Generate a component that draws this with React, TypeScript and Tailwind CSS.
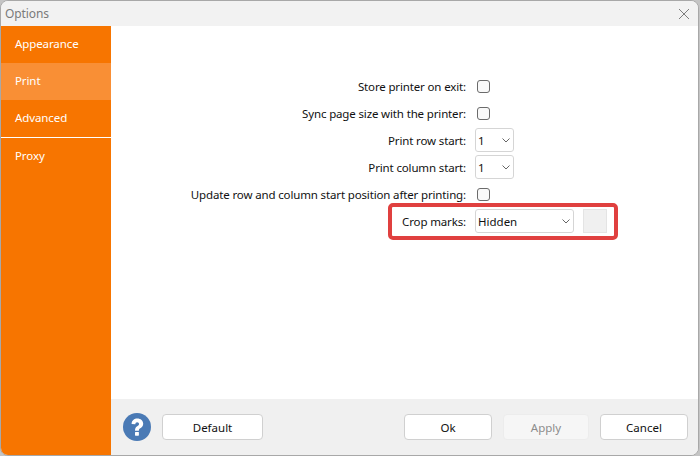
import React from "react";

function Check() {
  return <div className="ml-[11px] w-[13px] h-[13px] border border-[#6b6b6b] rounded-[3px] bg-[#f9f9f9]" />;
}

function Chevron() {
  return (
    <svg width="8" height="5" viewBox="0 0 8 5" fill="none" className="shrink-0">
      <path d="M0.5 0.5 L4 4 L7.5 0.5" stroke="#666" strokeWidth="1" />
    </svg>
  );
}

function Row({ label, children }: { label: string; children: React.ReactNode }) {
  return (
    <div className="flex items-center h-6 relative">
      <div className="w-[355px] text-right whitespace-nowrap tracking-[-0.145px] pt-[1px]">{label}</div>
      {children}
    </div>
  );
}

function Spin({ w, text }: { w: string; text: string }) {
  return (
    <div className={`ml-[9px] h-6 border border-[#d5d5d5] rounded-[3px] bg-white flex items-center justify-between pl-[2px] pr-[3px] ${w}`}>
      <span className="pt-[1px]">{text}</span>
      <Chevron />
    </div>
  );
}

export default function App() {
  return (
    <div className="w-[700px] h-[456px] bg-[#c4c4c4] overflow-hidden font-['Noto_Sans','Open_Sans',sans-serif] text-[11.5px] text-[#111]">
      <div className="w-[699px] h-[456px] border border-[#a8a8a8] rounded-[8px] bg-[#f2f2f2] flex flex-col overflow-hidden">
        <div className="h-[25px] shrink-0 flex items-center justify-between pl-[4px] pr-[8px] bg-[#f2f2f2]">
          <span className="text-[#7a7a7a] text-[12px] tracking-[-0.1px]">Options</span>
          <svg width="12" height="12" viewBox="0 0 12 12" fill="none">
            <path d="M1 1 L11 11 M11 1 L1 11" stroke="#7d7d7d" strokeWidth="1" />
          </svg>
        </div>
        <div className="flex flex-1 min-h-0">
          <div className="w-[110px] shrink-0 bg-[#f77500] text-white flex flex-col tracking-[-0.1px]">
            <div className="h-[37px] flex items-center pl-[14px] pb-[1px]">Appearance</div>
            <div className="h-[37px] flex items-center pl-[14px] pb-[1px] bg-[#f98f35]">Print</div>
            <div className="h-[37px] flex items-center pl-[14px] pb-[1px]">Advanced</div>
            <div className="h-px bg-white" />
            <div className="h-[37px] flex items-center pl-[14px] pb-[1px]">Proxy</div>
          </div>
          <div className="flex-1 flex flex-col min-w-0">
            <div className="flex-1 bg-white pt-[48px] flex flex-col gap-[3px]">
              <Row label="Store printer on exit:"><Check /></Row>
              <Row label="Sync page size with the printer:"><Check /></Row>
              <Row label="Print row start:"><Spin w="w-[39px]" text="1" /></Row>
              <Row label="Print column start:"><Spin w="w-[39px]" text="1" /></Row>
              <Row label="Update row and column start position after printing:"><Check /></Row>
              <Row label="Crop marks:">
                <Spin w="w-[99px]" text="Hidden" />
                <div className="ml-[9px] w-6 h-6 bg-[#f0f0f0] border border-[#e4e4e4]" />
                <div className="absolute left-[277px] top-[-6px] w-[230px] h-[37px] border-[4px] border-[#e0403f] rounded-[5px]" />
              </Row>
            </div>
            <div className="h-[56px] shrink-0 bg-[#f0f0f0] flex items-center pl-[12px] pr-[10px]">
              <svg width="28" height="28" viewBox="0 0 28 28" className="shrink-0">
                <circle cx="14" cy="14" r="14" fill="#4a7ab5" />
                <path d="M8.6 11 C8.6 7.2 11.3 5.4 14.3 5.4 C17.7 5.4 20.2 7.6 20.2 10.7 C20.2 13 18.9 14.2 17.3 15.2 C16.1 16 15.9 16.5 15.9 17.8 L12 17.8 C12 15.6 12.6 14.4 14.2 13.3 C15.4 12.5 16 12 16 11 C16 9.9 15.3 9.2 14.2 9.2 C13 9.2 12.4 10 12.3 11.2 Z" fill="#fff" />
                <rect x="12" y="19" width="3.9" height="3.7" rx="0.6" fill="#fff" />
              </svg>
              <div className="ml-[11px] w-[101px] h-[26px] pt-[1px] rounded-[4px] bg-white border border-[#d0d0d0] flex items-center justify-center">Default</div>
              <div className="flex-1" />
              <div className="w-[88px] h-[26px] pt-[1px] rounded-[4px] bg-white border border-[#d0d0d0] flex items-center justify-center">Ok</div>
              <div className="ml-[11px] w-[86px] h-[26px] pt-[1px] rounded-[4px] bg-[#f6f6f6] border border-[#ececec] text-[#8c8c8c] flex items-center justify-center">Apply</div>
              <div className="ml-[11px] w-[88px] h-[26px] pt-[1px] rounded-[4px] bg-white border border-[#d0d0d0] flex items-center justify-center">Cancel</div>
            </div>
          </div>
        </div>
      </div>
    </div>
  );
}
